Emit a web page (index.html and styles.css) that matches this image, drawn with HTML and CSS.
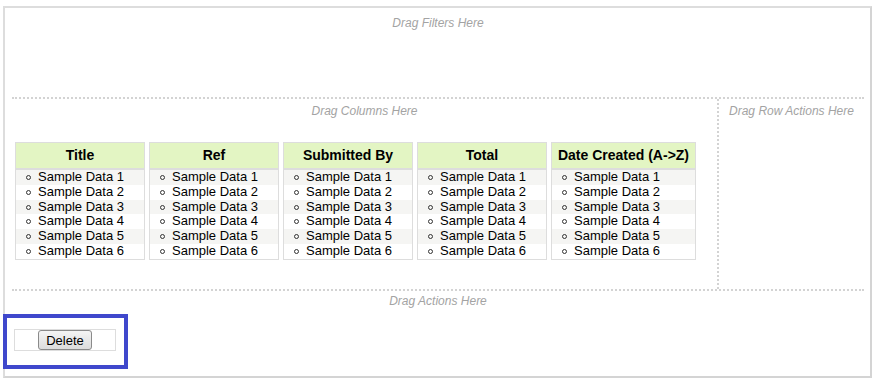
FILE: index.html
```html
<!DOCTYPE html>
<html lang="en">
<head>
    <meta charset="UTF-8">
    <title>Report Builder</title>
    <link rel="stylesheet" href="styles.css">
</head>
<body>
    <div class="builder">
        <div class="zone filters">
            <div class="zone-label">Drag Filters Here</div>
        </div>

        <div class="middle">
            <div class="zone columns">
                <div class="zone-label">Drag Columns Here</div>
                <div class="grid">
                    <div class="col">
                        <div class="col-head">Title</div>
                        <ul class="col-data">
                            <li>Sample Data 1</li><li>Sample Data 2</li><li>Sample Data 3</li>
                            <li>Sample Data 4</li><li>Sample Data 5</li><li>Sample Data 6</li>
                        </ul>
                    </div>
                    <div class="col">
                        <div class="col-head">Ref</div>
                        <ul class="col-data">
                            <li>Sample Data 1</li><li>Sample Data 2</li><li>Sample Data 3</li>
                            <li>Sample Data 4</li><li>Sample Data 5</li><li>Sample Data 6</li>
                        </ul>
                    </div>
                    <div class="col">
                        <div class="col-head">Submitted By</div>
                        <ul class="col-data">
                            <li>Sample Data 1</li><li>Sample Data 2</li><li>Sample Data 3</li>
                            <li>Sample Data 4</li><li>Sample Data 5</li><li>Sample Data 6</li>
                        </ul>
                    </div>
                    <div class="col">
                        <div class="col-head">Total</div>
                        <ul class="col-data">
                            <li>Sample Data 1</li><li>Sample Data 2</li><li>Sample Data 3</li>
                            <li>Sample Data 4</li><li>Sample Data 5</li><li>Sample Data 6</li>
                        </ul>
                    </div>
                    <div class="col wide">
                        <div class="col-head">Date Created (A-&gt;Z)</div>
                        <ul class="col-data">
                            <li>Sample Data 1</li><li>Sample Data 2</li><li>Sample Data 3</li>
                            <li>Sample Data 4</li><li>Sample Data 5</li><li>Sample Data 6</li>
                        </ul>
                    </div>
                </div>
            </div>
            <div class="zone row-actions">
                <div class="zone-label">Drag Row Actions Here</div>
            </div>
        </div>

        <div class="zone actions">
            <div class="zone-label">Drag Actions Here</div>
            <div class="action-box">
                <button type="button">Delete</button>
            </div>
        </div>

        <!-- highlight drawn over the actions area -->
        <div class="highlight"></div>
    </div>
</body>
</html>
```

FILE: styles.css
```css
body {
    margin: 0;
    font-family: "Liberation Sans", Arial, sans-serif;
    background-color: #fff;
    color: #000;
}

.builder {
    position: relative;
    width: 852px;
    height: 368px;
    margin: 6px 0 0 3px;
    padding: 0 6px 0 7px;
    border: 2px solid #ddd;
    border-right-color: #d4d4d4;
    border-bottom-color: #d4d4d4;
}

.zone-label {
    font-size: 12px;
    line-height: 14px;
    font-style: italic;
    color: #a3a3a3;
    text-align: center;
}

.filters {
    height: 91px;
    padding-top: 8px;
    box-sizing: border-box;
    border-bottom: 2px dotted #d3d3d3;
}

.middle {
    display: flex;
    height: 190px;
    border-bottom: 2px dotted #d3d3d3;
}

.columns {
    flex: 1;
    padding-top: 5px;
}

.row-actions {
    width: 145px;
    padding-top: 5px;
    border-left: 2px dotted #d3d3d3;
}

.grid {
    display: flex;
    align-items: flex-start;
    gap: 4px;
    margin: 24px 0 0 3px;
}

.col {
    width: 128px;
    border: 1px solid #ddd;
}

.col.wide {
    width: 143px;
}

.col-head {
    height: 25px;
    line-height: 25px;
    background-color: #e3f5c3;
    border-bottom: 2px solid #ddd;
    font-size: 14px;
    font-weight: bold;
    text-align: center;
    white-space: nowrap;
}

.col-data {
    margin: 0;
    padding: 0;
    list-style: none;
    font-size: 13px;
    line-height: 14.8px;
}

.col-data li {
    position: relative;
    padding-left: 22px;
}

/* hollow circle bullet */
.col-data li::before {
    content: "";
    position: absolute;
    left: 10px;
    top: 5px;
    width: 3px;
    height: 3px;
    border: 1px solid #333;
    border-radius: 50%;
}

.col-data li:nth-child(odd) {
    background-color: #f5f5f3;
}

.actions {
    padding-top: 3px;
}

.action-box {
    width: 100px;
    height: 20px;
    margin: 21px 0 0 2px;
    border: 1px solid #ddd;
    display: flex;
    justify-content: center;
}

.action-box button {
    height: 20px;
    padding: 0 7px;
    font-family: "Liberation Sans", Arial, sans-serif;
    font-size: 13px;
    color: #000;
    background: linear-gradient(#f4f4f4, #dcdcdc);
    border: 1px solid #8a8a8a;
    border-radius: 3px;
}

.highlight {
    position: absolute;
    left: -2px;
    top: 306px;
    width: 125px;
    height: 55px;
    box-sizing: border-box;
    border: 4px solid #3f48cc;
}
```
